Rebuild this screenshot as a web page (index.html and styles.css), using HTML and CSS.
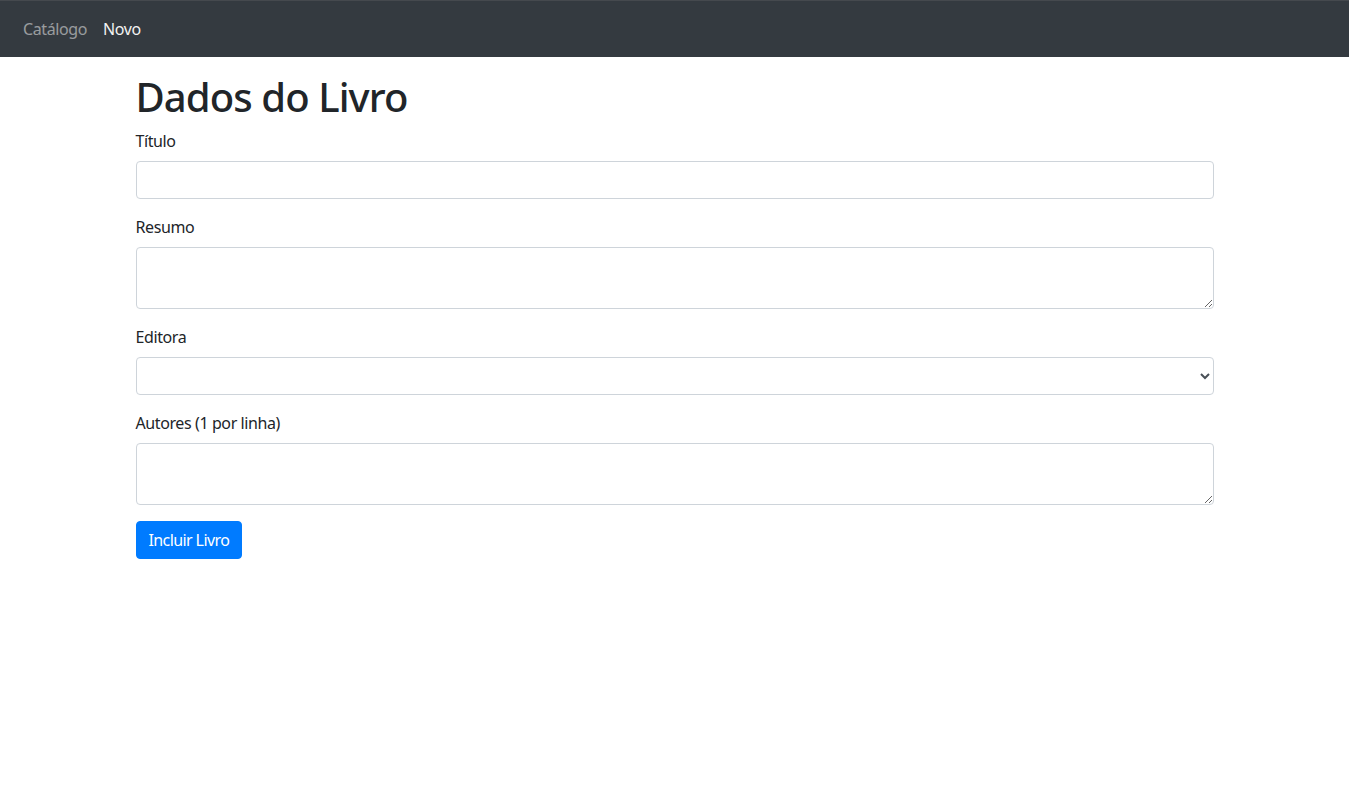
FILE: index.html
```html
<!DOCTYPE html>
<html lang="pt">
<head>
<meta charset="utf-8">
<title>Dados do Livro</title>
<link rel="stylesheet" href="styles.css">
</head>
<body>
<nav class="navbar">
  <a class="nav-link" href="#">Catálogo</a>
  <a class="nav-link active" href="#">Novo</a>
</nav>
<main class="container">
  <h1 class="title">Dados do Livro</h1>
  <form class="form">
    <div class="form-group">
      <label class="label" for="titulo">Título</label>
      <input class="control" id="titulo" type="text">
    </div>
    <div class="form-group">
      <label class="label" for="resumo">Resumo</label>
      <textarea class="control area" id="resumo" rows="2"></textarea>
    </div>
    <div class="form-group">
      <label class="label" for="editora">Editora</label>
      <select class="control select" id="editora"><option></option></select>
    </div>
    <div class="form-group">
      <label class="label" for="autores">Autores (1 por linha)</label>
      <textarea class="control area" id="autores" rows="2"></textarea>
    </div>
    <button class="btn" type="button">Incluir Livro</button>
  </form>
</main>
</body>
</html>
```

FILE: styles.css
```css
* { box-sizing: border-box; }
html, body { margin: 0; }
body {
  font-family: "Noto Sans", "Open Sans", sans-serif;
  font-size: 16px;
  line-height: 24px;
  color: #212529;
  background: #fff;
}
.navbar {
  display: flex;
  align-items: center;
  height: 57px;
  padding: 8px 16px 8px 15px;
  background: #343a40;
  border-top: 1px solid #45494e;
}
.nav-link {
  padding: 8px;
  color: rgba(255,255,255,.5);
  text-decoration: none;
  letter-spacing: -0.4px;
}
.nav-link.active { color: #f2f2f2; }
.container {
  max-width: 1078px;
  margin: 0 auto;
}
.title {
  margin: 16px 0 8px;
  font-size: 40px;
  line-height: 48px;
  font-weight: 500;
  letter-spacing: -0.9px;
}
.form-group {
  display: flex;
  flex-direction: column;
  margin-bottom: 16px;
}
.label {
  margin-bottom: 8px;
  letter-spacing: -0.4px;
}
.control {
  display: block;
  width: 100%;
  height: 38px;
  padding: 6px 12px;
  font: inherit;
  color: #495057;
  background: #fff;
  border: 1px solid #ced4da;
  border-radius: 4px;
  outline: none;
}
.area {
  height: 62px;
  resize: vertical;
}
.select { padding-right: 8px; }
.btn {
  display: inline-block;
  height: 38px;
  padding: 6px 12px;
  font: inherit;
  letter-spacing: -0.6px;
  color: #fff;
  background: #007bff;
  border: 1px solid #007bff;
  border-radius: 4px;
}
```
